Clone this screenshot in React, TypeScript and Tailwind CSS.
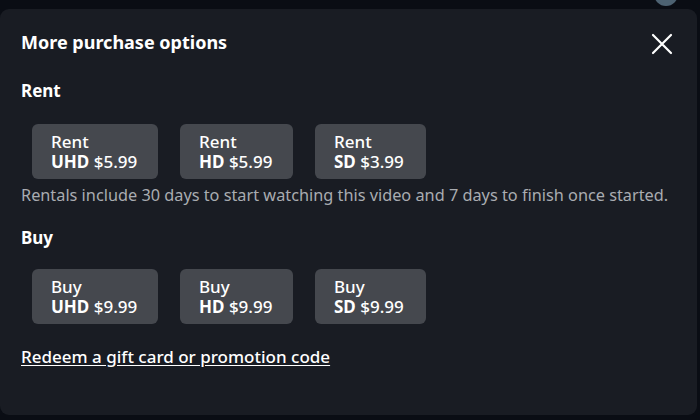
import React from 'react';

type Option = { kind: string; quality: string; price: string; w: string };

const RENT: Option[] = [
  { kind: 'Rent', quality: 'UHD', price: '$5.99', w: 'w-[126px]' },
  { kind: 'Rent', quality: 'HD', price: '$5.99', w: 'w-[113px]' },
  { kind: 'Rent', quality: 'SD', price: '$3.99', w: 'w-[111px]' },
];

const BUY: Option[] = [
  { kind: 'Buy', quality: 'UHD', price: '$9.99', w: 'w-[126px]' },
  { kind: 'Buy', quality: 'HD', price: '$9.99', w: 'w-[113px]' },
  { kind: 'Buy', quality: 'SD', price: '$9.99', w: 'w-[111px]' },
];

const OptionButton: React.FC<{ option: Option }> = ({ option }) => (
  <button
    className={`${option.w} h-[55px] rounded-[6px] bg-[#45484e] pl-[19px] flex flex-col justify-center text-left text-white text-[17px] leading-[20px] font-medium`}
  >
    <span>{option.kind}</span>
    <span>
      <span className="font-bold">{option.quality}</span> {option.price}
    </span>
  </button>
);

const App: React.FC = () => {
  return (
    <div
      className="w-[700px] h-[420px] bg-[#0a0d14] pt-[9px] pr-[3px] pb-[5px] relative overflow-hidden"
      style={{ fontFamily: '"Noto Sans", "Open Sans", Arial, sans-serif' }}
    >
      {/* avatar peeking above the dialog */}
      <div className="absolute left-[654px] top-[-18px] w-[24px] h-[24px] rounded-full bg-[#4d6272]" />

      <div className="relative h-full rounded-[9px] bg-[#191c23] pl-[21px] pt-[21px]">
        <div className="flex items-start justify-between">
          <h2 className="text-[18px] leading-[24px] font-bold text-white">More purchase options</h2>
          <button className="absolute right-[24px] top-[24px] text-white" aria-label="Close">
            <svg width="22" height="22" viewBox="0 0 22 22" fill="none" stroke="currentColor" strokeWidth="2.2" strokeLinecap="round">
              <path d="M2 2L20 20M20 2L2 20" />
            </svg>
          </button>
        </div>

        <h3 className="mt-[25px] text-[17px] leading-[24px] font-bold text-white">Rent</h3>
        <div className="mt-[21px] ml-[11px] flex gap-[22px]">
          {RENT.map(o => (
            <OptionButton key={o.quality} option={o} />
          ))}
        </div>
        <p className="mt-[4px] text-[16.3px] leading-[24px] text-[#a9acb1]">
          Rentals include 30 days to start watching this video and 7 days to finish once started.
        </p>

        <h3 className="mt-[19px] text-[17px] leading-[24px] font-bold text-white">Buy</h3>
        <div className="mt-[19px] ml-[11px] flex gap-[22px]">
          {BUY.map(o => (
            <OptionButton key={o.quality} option={o} />
          ))}
        </div>

        <a href="#" className="block mt-[21px] w-fit text-[17px] leading-[24px] font-medium text-white underline underline-offset-2">
          Redeem a gift card or promotion code
        </a>
      </div>
    </div>
  );
};

export default App;
